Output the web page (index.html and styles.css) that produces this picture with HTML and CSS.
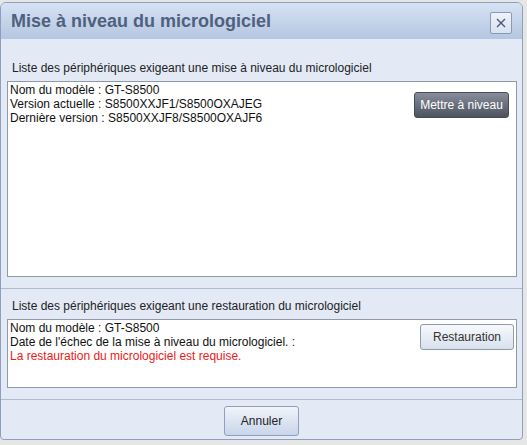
FILE: index.html
```html
<!DOCTYPE html>
<html lang="fr">
<head>
<meta charset="utf-8">
<title>Mise à niveau du micrologiciel</title>
<link rel="stylesheet" href="styles.css">
</head>
<body>
<div class="dialog">
  <div class="titlebar">
    <h1 class="title">Mise à niveau du micrologiciel</h1>
    <button class="close" aria-label="Fermer">
      <svg width="10" height="10" viewBox="0 0 10 10"><path d="M1 1 L9 9 M9 1 L1 9" stroke="#4a5a78" stroke-width="1.4" fill="none"/></svg>
    </button>
  </div>
  <div class="section section-upgrade">
    <div class="label">Liste des périphériques exigeant une mise à niveau du micrologiciel</div>
    <div class="box box-upgrade">
      <div class="lines">
        <div>Nom du modèle : GT-S8500</div>
        <div>Version actuelle : S8500XXJF1/S8500OXAJEG</div>
        <div>Dernière version : S8500XXJF8/S8500OXAJF6</div>
      </div>
      <button class="btn btn-dark">Mettre à niveau</button>
    </div>
  </div>
  <div class="section section-restore">
    <div class="label">Liste des périphériques exigeant une restauration du micrologiciel</div>
    <div class="box box-restore">
      <div class="lines">
        <div>Nom du modèle : GT-S8500</div>
        <div>Date de l'échec de la mise à niveau du micrologiciel. :</div>
        <div class="warn">La restauration du micrologiciel est requise.</div>
      </div>
      <button class="btn btn-light btn-restore">Restauration</button>
    </div>
  </div>
  <div class="footer">
    <button class="btn btn-cancel">Annuler</button>
  </div>
</div>
</body>
</html>
```
FILE: styles.css
```css
html, body {
  margin: 0;
  padding: 0;
}
body {
  background: #e6e6e6;
  font-family: "Liberation Sans", Arial, sans-serif;
  font-size: 12px;
  color: #1a1a1a;
  height: 445px;
  overflow: hidden;
}
.dialog {
  margin-top: 2px;
  width: 521px;
  height: 436px;
  border: 1px solid #8d9fbd;
  border-radius: 6px 6px 4px 4px;
  background: #e3eaf6;
  overflow: hidden;
  display: flex;
  flex-direction: column;
}
.titlebar {
  height: 36px;
  flex: none;
  display: flex;
  align-items: center;
  justify-content: space-between;
  padding: 0 10px 0 10px;
  background: linear-gradient(#d7e2f3, #b4c6e1);
}
.title {
  margin: 0;
  font-size: 18px;
  font-weight: bold;
  color: #50607f;
}
.close {
  width: 22px;
  height: 22px;
  padding: 0;
  margin-top: 3px;
  border: 1px solid #8a9ab3;
  border-radius: 2px;
  background: linear-gradient(#eef2f9, #d8e2f1);
  display: flex;
  align-items: center;
  justify-content: center;
}
.section {
  padding: 0 5px 0 6px;
  border-bottom: 1px solid #aabbd3;
}
.section-upgrade {
  padding-top: 22px;
  padding-bottom: 11px;
}
.section-restore {
  padding-top: 10px;
  padding-bottom: 11px;
}
.label {
  line-height: 14px;
  padding-left: 5px;
  margin-bottom: 6px;
  color: #222;
}
.box {
  background: #fff;
  border: 1px solid #8f99a8;
  display: flex;
  align-items: flex-start;
  padding: 1px 0 0 2px;
}
.box-upgrade {
  height: 193px;
}
.box-restore {
  height: 66px;
}
.lines {
  flex: 1;
  line-height: 14px;
  color: #111;
}
.warn {
  color: #f01818;
}
.btn {
  font-family: "Liberation Sans", Arial, sans-serif;
  font-size: 12px;
  border-radius: 3px;
  padding: 0;
}
.btn-dark {
  width: 95px;
  height: 26px;
  margin: 9px 7px 0 0;
  color: #fff;
  border: 1px solid #454b57;
  background: linear-gradient(#878d9a, #4c525e);
}
.btn-light {
  color: #333;
  border: 1px solid #8e9cb1;
  background: linear-gradient(#f7f8fb, #d9e1ed);
}
.btn-restore {
  width: 94px;
  height: 26px;
  margin: 3px 2px 0 0;
}
.footer {
  flex: 1;
  display: flex;
  justify-content: center;
  align-items: flex-start;
  padding-top: 6px;
}
.btn-cancel {
  width: 75px;
  height: 30px;
  color: #222;
  border: 1px solid #8fa0bc;
  background: linear-gradient(#f1f4fa, #c8d5ea);
}
```
